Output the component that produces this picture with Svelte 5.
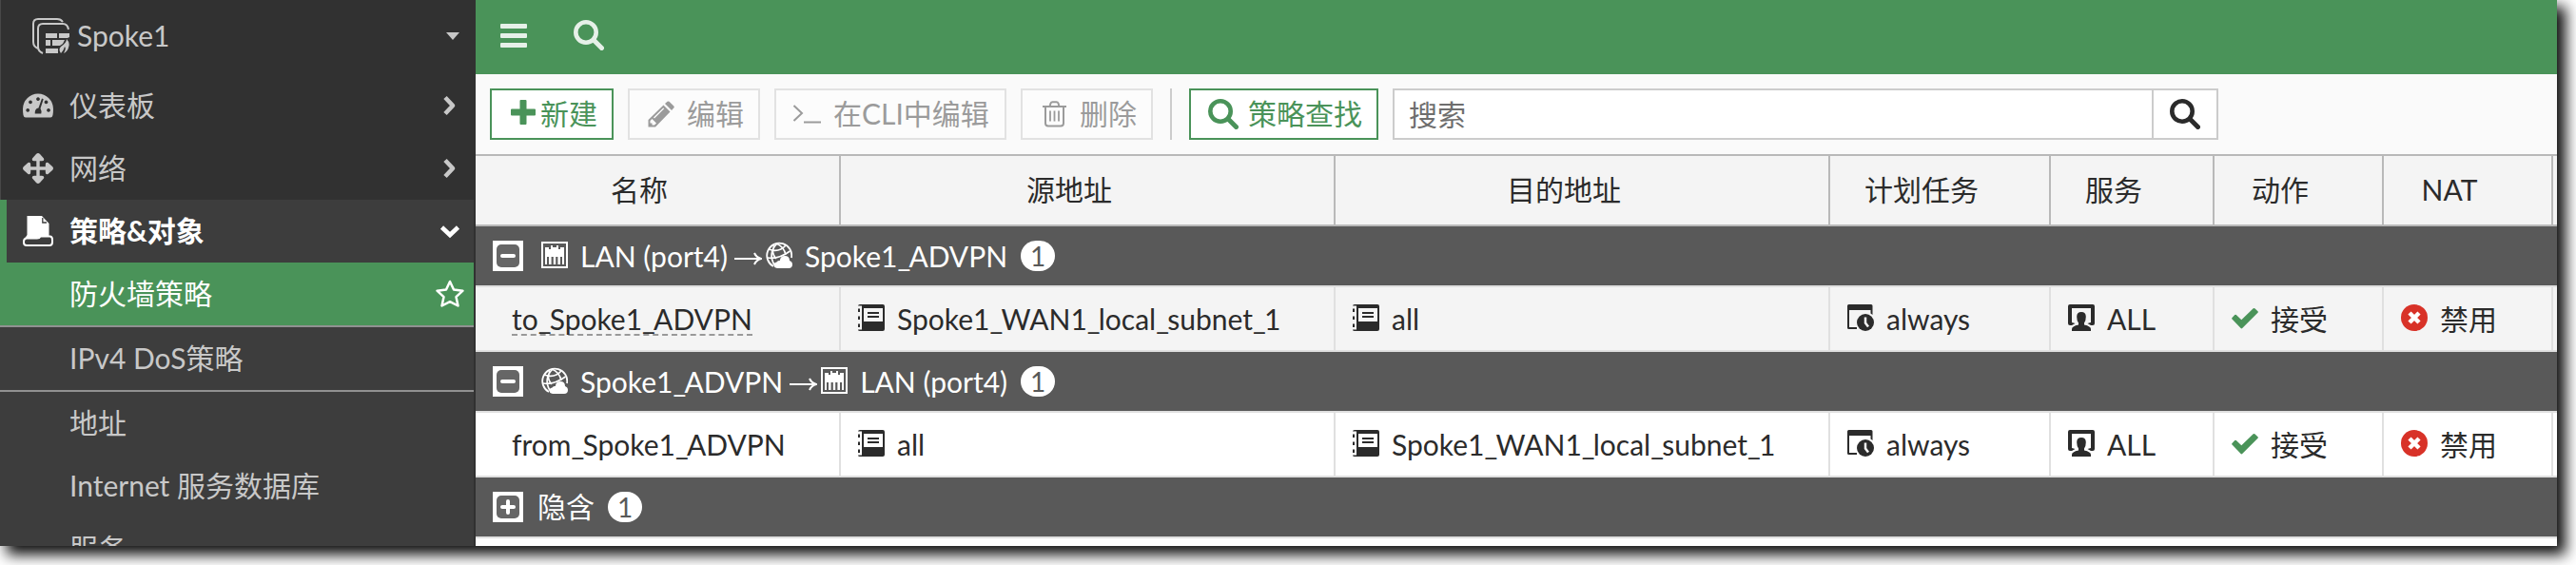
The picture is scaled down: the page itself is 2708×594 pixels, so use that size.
<script>
  const nav = [
    { label: '仪表板', icon: 'gauge', arrow: 'right', kind: 'top' },
    { label: '网络', icon: 'move', arrow: 'right', kind: 'top' },
    { label: '策略&对象', icon: 'policy', arrow: 'down', kind: 'open' },
    { label: '防火墙策略', arrow: 'star', kind: 'sub active lined' },
    { label: 'IPv4 DoS策略', kind: 'sub lined' },
    { label: '地址', kind: 'sub' },
    { label: 'Internet 服务数据库', kind: 'sub' },
    { label: '服务', kind: 'sub' }
  ];
  const heads = ['名称', '源地址', '目的地址', '计划任务', '服务', '动作', 'NAT', ''];
  const lan = { icon: 'port', text: 'LAN (port4)' };
  const vpn = { icon: 'globe', text: 'Spoke1_ADVPN' };
  const sections = [
    { from: lan, to: vpn, row: { name: 'to_Spoke1_ADVPN', src: 'Spoke1_WAN1_local_subnet_1', dst: 'all', hover: true } },
    { from: vpn, to: lan, row: { name: 'from_Spoke1_ADVPN', src: 'all', dst: 'Spoke1_WAN1_local_subnet_1' } },
    { title: '隐含' }
  ];
</script>

{#snippet ident(text)}{#each text.split('_') as part, i}{#if i}<u>_</u>{/if}{part}{/each}{/snippet}

{#snippet icon(name)}
  {#if name === 'vdom'}
    <svg width="40" height="40" viewBox="0 0 40 40" fill="none" stroke="currentColor" stroke-width="2">
      <path d="M7 33Q2 31 2 26V7Q2 2 7 2H27Q31 2 33 5M12 38Q7 36 7 31V12Q7 7 12 7H33Q38 7 39 13" />
      <g fill="currentColor" stroke="none"><path d="M15 17H27V22H15ZM29 17H40V21L38 22H29ZM15 24H20V30H15ZM22 24H35L33 28L30 30H22ZM15 33H28V38H15Z" /><path d="M37 23Q41 27 39 32Q38 36 34 38Q37 33 35 31Q34 35 31 38Q28 34 31 31Q37 27 37 23Z" /></g>
    </svg>
  {:else if name === 'gauge'}
    <svg width="32" height="32" viewBox="0 0 32 32">
      <path fill="currentColor" fill-rule="evenodd" d="M3 28.500Q1 28.500 .5 26Q0 23.500 0 19.500A16 16 0 0 1 32 19.500Q32 23.500 31.500 26Q31 28.500 29 28.500ZM16 7.200a1.900 1.900 0 1 0 .01 0ZM8 10.500a1.900 1.900 0 1 0 .01 0ZM24.500 10.500a1.900 1.900 0 1 0 .01 0ZM5.200 19a1.900 1.900 0 1 0 .01 0ZM27 19a1.900 1.900 0 1 0 .01 0ZM20 8.500L16.500 18.500Q12.500 19 12.700 24.500H19.300Q20 21.500 18.500 19L21.700 9.200Z" />
    </svg>
  {:else if name === 'move'}
    <svg width="32" height="32" viewBox="0 0 32 32" fill="currentColor">
      <path d="M16 0Q17 0 18 1L22 5.500Q23 8.200 20 8.200H17.700V14.300H23.800V12Q23.800 9 26.500 10L31 14Q33 16 31 18L26.500 22Q23.800 23 23.800 20V17.700H17.700V23.800H20Q23 23.800 22 26.500L18 31Q16 33 14 31L10 26.500Q9 23.800 12 23.800H14.300V17.700H8.200V20Q8.200 23 5.500 22L1 18Q-1 16 1 14L5.500 10Q8.200 9 8.200 12V14.300H14.300V8.200H12Q9 8.200 10 5.500L14 1Q15 0 16 0Z" />
    </svg>
  {:else if name === 'policy'}
    <svg width="32" height="32" viewBox="0 0 32 32">
      <path fill="currentColor" d="M4.500 0H20L27.500 8V21H19Q17.500 23 15 23H2.500L4.500 20Z" />
      <path d="M20.800 2V7H25" fill="none" stroke="#3d3d3d" stroke-width="1.300" />
      <path d="M1 27Q1 23.500 4 23.500H15Q17.500 23.500 18.500 21.500H28.500Q31 21.500 31 25V27.500Q31 31 28 31H4Q1 31 1 28Z" fill="#3d3d3d" stroke="currentColor" stroke-width="2" />
    </svg>
  {:else if name === 'right'}
    <svg width="16" height="22" viewBox="0 0 16 22" fill="none" stroke="currentColor" stroke-width="4.600"><path d="M3 2.500L11 11L3 19.500" stroke-linejoin="round" /></svg>
  {:else if name === 'down'}
    <svg width="22" height="16" viewBox="0 0 22 16" fill="none" stroke="currentColor" stroke-width="4.600"><path d="M2.500 4L11 12L19.500 4" stroke-linejoin="miter" /></svg>
  {:else if name === 'star'}
    <svg width="32" height="32" viewBox="0 0 32 32" fill="none" stroke="currentColor" stroke-width="2.500" stroke-linejoin="round"><path d="M16 3L20 11.500L29.500 12.700L22.500 19.200L24.500 28.500L16 24.200L7.500 28.500L9.500 19.200L2.500 12.700L12 11.500Z" /></svg>
  {:else if name === 'search'}
    <svg width="32" height="32" viewBox="0 0 32 32" fill="none" stroke="currentColor"><circle cx="13" cy="13" r="10.700" stroke-width="4.600" /><path d="M21.500 21.500L29.500 29.500" stroke-width="5" stroke-linecap="round" /></svg>
  {:else if name === 'plus'}
    <svg width="26" height="26" viewBox="0 0 26 26" fill="currentColor"><path d="M10.500 0H15.500Q16.500 0 16.500 1V9.500H25Q26 9.500 26 10.500V15.500Q26 16.500 25 16.500H16.500V25Q16.500 26 15.500 26H10.500Q9.500 26 9.500 25V16.500H1Q0 16.500 0 15.500V10.500Q0 9.500 1 9.500H9.500V1Q9.500 0 10.500 0Z" /></svg>
  {:else if name === 'pencil'}
    <svg width="28" height="28" viewBox="0 0 28 28" fill="currentColor"><path fill-rule="evenodd" d="M16.500 4.500L23.500 11.500L8 27.500H.5V20ZM2.500 21V23.500H4.500V25.500H7L9 23.500L4.500 19ZM16.200 7.500L6 17.500L7 18.500L17.200 8.300Z" /><path d="M18 3L20.500 .8Q21.500 0 22.500 .8L27.300 5.500Q28.200 6.500 27.300 7.500L25 10Z" /></svg>
  {:else if name === 'cli'}
    <svg width="31" height="22" viewBox="0 0 31 22" fill="none" stroke="currentColor" stroke-width="2"><path d="M1.500 2L10 10L1.500 18M12 19.500H30" /></svg>
  {:else if name === 'trash'}
    <svg width="25" height="28" viewBox="0 0 25 28" fill="none" stroke="currentColor" stroke-width="2"><path d="M0 6H25M3 6V23.500Q3 26.500 6 26.500H19Q22 26.500 22 23.500V6M7.500 6L8.500 2.500Q9 1.200 10.500 1.200H14.500Q16 1.200 16.500 2.500L17.500 6" /><path d="M8 10.500V21.500M12.500 10.500V21.500M17 10.500V21.500" stroke-width="1.800" /></svg>
  {:else if name === 'port'}
    <svg width="28" height="28" viewBox="0 0 28 28" fill="none" stroke="currentColor"><rect x="1" y="1" width="26" height="26" stroke-width="2" /><path fill="currentColor" stroke="none" d="M4 6H8V8H10V4H12V6H16V4H18V8H20V6H24V24H22V16H20V24H17.400V16H15.200V24H12.800V16H10.600V24H8V16H6V24H4Z" /></svg>
  {:else if name === 'globe'}
    <svg width="28" height="28" viewBox="0 0 28 28" fill="none" stroke="currentColor" stroke-width="1.800"><path d="M8 26A13 13 0 1 1 27 17" /><path d="M9 24.500Q2 12 12 2M11 2Q19 5 21 14M3 8Q14 12 21 4M2 17Q13 19 25.500 10M9 4Q5 12 11 18" stroke-width="1.600" /><path d="M12 28Q8.500 27.500 8.500 24.500Q8.500 22 11.500 21.500Q12.500 19.500 14.800 20Q15.500 15 20 15Q25 15 25 20Q28 21 28 24Q28 28 24 28Z" fill="currentColor" stroke="none" /></svg>
  {:else if name === 'book'}
    <svg width="28" height="28" viewBox="0 0 28 28" fill="currentColor"><path fill-rule="evenodd" d="M2 0H26Q28 0 28 2V26Q28 28 26 28H2Q0 28 0 26.500H4V1.500H0Q0 0 2 0ZM6 4V18H26V4Z" /><path d="M0 4.500H2V8H0ZM0 12.500H2V16H0ZM0 20.500H2V24H0ZM10 8H22V10H10ZM10 12H22V14H10Z" /></svg>
  {:else if name === 'sched'}
    <svg width="28" height="28" viewBox="0 0 28 28"><path fill="currentColor" fill-rule="evenodd" d="M1.500 0H25Q26.500 0 26.500 1.500V11L24.500 9.500V6H2V24H10V26H1.500Q0 26 0 24.500V1.500Q0 0 1.500 0Z" /><circle cx="19" cy="19" r="9" fill="currentColor" /><path d="M19 13.500V19.500L22 23.500" fill="none" stroke="#f4f4f4" stroke-width="2.500" /></svg>
  {:else if name === 'service'}
    <svg width="28" height="28" viewBox="0 0 28 28" fill="currentColor"><path fill-rule="evenodd" d="M2 0H26Q28 0 28 2V20Q28 22 26 22H24L20.500 20L24 19V4H4V19L7.500 20L4 22H2Q0 22 0 20V2Q0 0 2 0Z" /><path d="M14 8Q18.800 8 18.800 13Q18.800 17 17 19.500V21.500Q24 23 24 26V28H4V26Q4 23 11 21.500V19.500Q9.200 17 9.200 13Q9.200 8 14 8Z" /></svg>
  {:else if name === 'check'}
    <svg width="28" height="28" viewBox="0 0 28 28" fill="#4a9359"><path d="M.5 15.500Q-.3 14.700 .5 13.900L3.300 11Q4 10.300 4.800 11L10.300 16.300L22.700 4.300Q23.500 3.600 24.300 4.300L27.500 7.300Q28.200 8 27.500 8.800L11.200 25Q10.400 25.800 9.600 25Z" /></svg>
  {:else if name === 'deny'}
    <svg width="28" height="28" viewBox="0 0 28 28"><circle cx="14" cy="14" r="14" fill="#d83228" /><path d="M9 9L19 19M19 9L9 19" stroke="#fff" stroke-width="4.500" /></svg>
  {:else if name === 'arrow'}
    <svg width="29" height="16" viewBox="0 0 29 16" fill="none" stroke="currentColor" stroke-width="2"><path d="M0 8H27M21 2Q23 6.500 28 8Q23 9.500 21 14" /></svg>
  {/if}
{/snippet}

<div class="window">
  <aside>
    <div class="vdom">{@render icon('vdom')}<span>Spoke1</span><i></i></div>
    {#each nav as item}
      <div class="item {item.kind}">
        <span class="lead">{#if item.icon}{@render icon(item.icon)}{/if}</span>
        <span class="label">{item.label}</span>
        {#if item.arrow}<span class="tail">{@render icon(item.arrow)}</span>{/if}
      </div>
    {/each}
  </aside>
  <main>
    <header>
      <div class="menu"><b></b><b></b><b></b></div>
      {@render icon('search')}
    </header>
    <div class="toolbar">
      <button class="primary new">{@render icon('plus')}<span>新建</span></button>
      <button class="edit">{@render icon('pencil')}<span>编辑</span></button>
      <button class="cli">{@render icon('cli')}<span>在CLI中编辑</span></button>
      <button class="del">{@render icon('trash')}<span>删除</span></button>
      <div class="sep"></div>
      <button class="primary lookup">{@render icon('search')}<span>策略查找</span></button>
      <div class="search"><span>搜索</span><div class="go">{@render icon('search')}</div></div>
    </div>
    <div class="grid head">
      {#each heads as h}<div>{h}</div>{/each}
    </div>
    {#each sections as s}
      <div class="group">
        <div class="toggle"><div><b></b>{#if s.title}<b class="v"></b>{/if}</div></div>
        {#if s.title}
          <span class="title">{s.title}</span>
        {:else}
          {@render icon(s.from.icon)}<span class="from">{@render ident(s.from.text)}</span>
          <span class="arrow">{@render icon('arrow')}</span>
          {@render icon(s.to.icon)}<span class="to">{@render ident(s.to.text)}</span>
        {/if}
        <span class="badge">1</span>
      </div>
      {#if s.row}
        <div class="grid row" class:hover={s.row.hover}>
          <div class="name"><span>{@render ident(s.row.name)}</span></div>
          <div>{@render icon('book')}<span>{@render ident(s.row.src)}</span></div>
          <div>{@render icon('book')}<span>{@render ident(s.row.dst)}</span></div>
          <div>{@render icon('sched')}<span>always</span></div>
          <div>{@render icon('service')}<span>ALL</span></div>
          <div>{@render icon('check')}<span>接受</span></div>
          <div>{@render icon('deny')}<span>禁用</span></div>
          <div></div>
        </div>
      {/if}
    {/each}
  </main>
</div>

<style>
  :global(body) { background: #fff; overflow: hidden; height: 594px; }
  * { box-sizing: border-box; }
  svg { display: block; flex: none; }
  u { text-decoration: none; letter-spacing: -1.8px; }
  .window {
    width: 2688px; height: 574px; display: flex; overflow: hidden;
    font: 30px/36px Lato, "Noto Sans CJK SC", sans-serif;
    color: #2b2b2b; background: #fff; white-space: nowrap;
    box-shadow: 8px 8px 14px 1px rgba(0, 0, 0, .95);
  }
  aside { width: 500px; background: #313131; color: #c8c8c8; flex: none; box-shadow: inset 1px 0 #484848; }
  .vdom { height: 78px; display: flex; align-items: center; padding: 0 17px 2px 33px; }
  .vdom span { margin: -3px 0 0 8px; }
  .vdom i { margin-left: auto; border: 7px solid transparent; border-top: 8px solid; border-bottom: 0; }
  .item { width: 498px; height: 66px; display: flex; align-items: center; padding: 0 9px 0 24px; }
  .lead { width: 49px; flex: none; }
  .label { margin-top: -2px; }
  .tail { width: 32px; margin-left: auto; display: flex; justify-content: center; }
  .top { background: none; }
  .open { background: #3d3d3d; border-left: 7px solid #4a9359; padding-left: 17px; color: #fff; font-weight: 700; }
  .sub { background: #3d3d3d; }
  .active { background: #4a9359; color: #fff; }
  .lined { height: 68px; border-bottom: 2px solid #919191; }
  main { flex: 1; min-width: 0; }
  header { height: 78px; background: #4a9359; color: #e6f0e8; display: flex; align-items: center; padding: 0 26px 4px; gap: 49px; }
  .menu { width: 28px; display: grid; gap: 5px; }
  .menu b { height: 5px; border-radius: 1px; background: currentColor; }
  .toolbar { height: 84px; background: #fafafa; display: flex; align-items: center; padding: 0 15px; }
  button { height: 54px; border: 2px solid #e2e2e2; background: #fcfcfc; color: #9b9b9b; font: inherit; display: flex; align-items: center; padding: 0; margin-right: 15px; }
  button span { margin-top: -2px; }
  .primary { border-color: #4a9359; color: #4a9359; background: #fff; }
  .new { width: 130px; padding-left: 20px; }
  .new span { margin-left: 5px; }
  .new :global(svg) { margin-top: -5px; }
  .edit { width: 139px; padding-left: 19px; }
  .edit span { margin-left: 13px; }
  .cli { width: 244px; padding-left: 17px; }
  .cli span { margin-left: 12px; }
  .del { width: 139px; padding-left: 21px; margin-right: 18px; }
  .del span { margin-left: 14px; }
  .sep { width: 2px; height: 54px; background: #ccc; margin-right: 18px; }
  .lookup { width: 199px; padding-left: 18px; }
  .lookup span { margin-left: 10px; }
  .search { width: 868px; height: 54px; border: 2px solid #ccc; background: #fff; color: #6e6e6e; display: flex; align-items: center; justify-content: space-between; padding-left: 15px; }
  .go { width: 68px; height: 50px; border-left: 2px solid #ccc; color: #2b2b2b; display: grid; place-items: center; }
  .grid { display: grid; grid-template-columns: 384px 520px 520px 232px 172px 178px 178px 4px; }
  .grid > div { border-right: 2px solid #e0e0e0; display: flex; align-items: center; }
  .grid > div:last-child { border: 0; padding: 0; }
  .head { height: 76px; background: #f4f4f4; border: solid #b9b9b9; border-width: 2px 0; }
  .head > div { border-color: #b9b9b9; justify-content: center; padding: 0 38px 2px 0; }
  .row { height: 68px; border-bottom: 2px solid #e0e0e0; background: #fff; }
  .row > div { padding: 0 0 0 18px; }
  .row :global(svg) { margin-top: -2px; }
  .row span { margin: -1px 0 0 13px; }
  .row .name { padding-left: 38px; }
  .row .name span { margin: -1px 0 0; height: 36px; }
  .row.hover .name span { border-bottom: 2px dashed #999; }
  .hover { background: #f4f4f4; }
  .group { height: 64px; background: #595959; border-bottom: 2px solid #e0e0e0; color: #fff; display: flex; align-items: center; padding-left: 18px; }
  .group > :global(svg) { margin-top: -2px; }
  .toggle { width: 32px; height: 32px; padding: 4px; background: #fff; margin-right: 19px; }
  .toggle div { height: 24px; border-radius: 5px; background: #666; display: grid; place-items: center; }
  .toggle b { grid-area: 1 / 1; width: 16px; height: 4px; border-radius: 2px; background: #fff; }
  .toggle .v { width: 4px; height: 16px; }
  .from, .to { margin: -1px 0 0 13px; }
  .arrow { margin: 6px 4px 0 7px; }
  .title { margin: -2px 0 0 -4px; }
  .badge { margin-left: 14px; width: 36px; height: 32px; border-radius: 16px; background: #fff; color: #595959; display: grid; place-items: center; font-size: 28px; line-height: 32px; }
</style>
